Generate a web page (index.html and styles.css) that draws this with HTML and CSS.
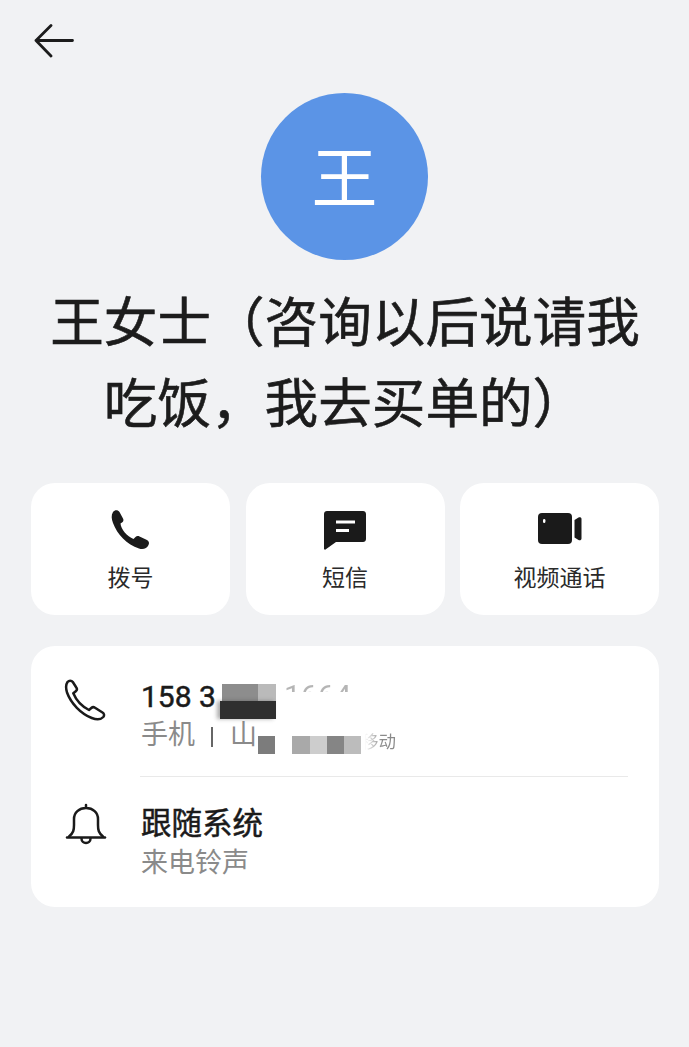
FILE: index.html
```html
<!DOCTYPE html>
<html lang="zh-CN">
<head>
  <meta charset="UTF-8">
  <meta name="viewport" content="width=device-width, initial-scale=1.0">
  <title>王女士</title>
  <link rel="stylesheet" href="styles.css">
</head>
<body>
  <div class="page">
    <header class="topbar">
      <svg class="back" width="42" height="34" viewBox="0 0 42 34" fill="none" stroke="#1c1c1c" stroke-width="2.800" stroke-linecap="round" stroke-linejoin="round">
        <path d="M38.500 16.500H2M17 1.500L2 16.500L17 32"/>
      </svg>
    </header>

    <div class="avatar">王</div>
    <h1 class="name">王女士（咨询以后说请我<br>吃饭，我去买单的）</h1>

    <div class="actions">
      <div class="action">
        <svg width="42" height="42" viewBox="0 0 42 42" fill="#1a1a1a">
          <path d="M3 3C5 .5 8 1 9.500 3L13 9.500C13.800 11 13.500 12.500 12 13.500L10.500 14.500C11 20 17 27.500 23.500 30L25.500 28C26.500 27 28 26.800 29.500 27.500L37 31C39 32 39.500 34 38.500 36C37 39.500 33 41 29 39.500C17 36 7 25 3 14C1.500 10 1 6 3 3Z"/>
        </svg>
        <span>拨号</span>
      </div>
      <div class="action">
        <svg width="42" height="42" viewBox="0 0 42 42">
          <path fill="#1a1a1a" d="M0 5C0 3.300 1.300 2 3 2H39C40.700 2 42 3.300 42 5V30C42 31.700 40.700 33 39 33H12L1.500 40.500C.7 41 0 40.500 0 39.500Z"/>
          <path stroke="#fff" stroke-width="3" d="M12 13H31M12 21.500H25"/>
        </svg>
        <span>短信</span>
      </div>
      <div class="action">
        <svg width="46" height="42" viewBox="0 0 46 42">
          <rect x="1" y="4" width="34" height="31" rx="4" fill="#1a1a1a"/>
          <path fill="#1a1a1a" d="M37.500 11L41.500 8.500C43 7.800 44.500 8.500 44.500 10V29.500C44.500 31 43 31.800 41.500 31L37.500 28.500Z"/>
          <rect x="6" y="10" width="2.400" height="4" rx="1.200" fill="#fff"/>
        </svg>
        <span>视频通话</span>
      </div>
    </div>

    <section class="info">
      <div class="row row-phone">
        <svg class="row-icon" width="44" height="44" viewBox="0 0 44 44" fill="none" stroke="#1a1a1a" stroke-width="2.500" stroke-linejoin="round">
          <path d="M4.500 4C6 2.200 8.500 2.200 9.800 4L13.300 9.500C14.200 10.800 14 12.300 12.800 13.300L10.300 15.300C13.300 22.500 19 28.500 26 32L28.300 30C29.400 29 30.800 28.900 32 29.700L39.500 34.500C41.300 35.700 41.500 37.500 40.300 39C37.500 42 33.500 41.800 28.800 40C18 35.800 8 25.500 4 14.500C2.800 10.500 2.800 6.500 4.500 4Z"/>
        </svg>
        <div class="row-text has-mosaic">
          <div class="row-title">158 3</div>
          <div class="row-sub">手机<i class="sep"></i>山</div>
          <span class="ghost ghost-num">1664</span>
          <span class="ghost ghost-loc">移动</span>
          <span class="mosaic m1"></span><span class="mosaic m2"></span><span class="mosaic m3"></span>
          <span class="mosaic m4"></span><span class="mosaic m5"></span><span class="mosaic m6"></span>
          <span class="mosaic m7"></span><span class="mosaic m8"></span>
        </div>
      </div>
      <div class="divider"></div>
      <div class="row row-ring">
        <svg class="row-icon bell" width="44" height="44" viewBox="0 0 44 44" fill="none" stroke="#1a1a1a" stroke-width="2.500" stroke-linejoin="round" stroke-linecap="round">
          <path d="M3 34.500H41"/>
          <path d="M5 33.500C9.500 30 10 27 10 22V16C10 9.500 15 5 22 5C29 5 34 9.500 34 16V22C34 27 34.500 30 39 33.500M22 2V5M17.500 35.500C17.500 41.500 26.500 41.500 26.500 35.500"/>
        </svg>
        <div class="row-text">
          <div class="row-title ring">跟随系统</div>
          <div class="row-sub ring-sub">来电铃声</div>
        </div>
      </div>
    </section>
  </div>
</body>
</html>
```

FILE: styles.css
```css
* {
  box-sizing: border-box;
}
body {
  margin: 0;
  background-color: #f1f2f4;
  font-family: "Noto Sans CJK SC", "Noto Sans", sans-serif;
  color: #1a1a1a;
}
.page {
  height: 1047px;
  padding: 0 30px 0 31px;
  overflow: hidden;
}
.topbar {
  height: 93px;
  padding: 24px 0 0 3px;
}
.back {
  display: block;
}
.avatar {
  width: 167px;
  height: 167px;
  margin-left: 230px;
  border-radius: 50%;
  background-color: #5b94e6;
  color: #fff;
  font-size: 66px;
  line-height: 161px;
  text-align: center;
}
.name {
  margin: 18px -20px 0;
  font-size: 53.600px;
  font-weight: 400;
  -webkit-text-stroke: 0.6px #1c1c1c;
  line-height: 81px;
  text-align: center;
  white-space: nowrap;
  color: #1c1c1c;
}
.actions {
  display: grid;
  grid-template-columns: repeat(3, 199px);
  justify-content: space-between;
  margin-top: 43px;
}
.action {
  height: 132px;
  padding-top: 26px;
  border-radius: 24px;
  background-color: #fff;
  display: flex;
  flex-direction: column;
  align-items: center;
  font-size: 23px;
  line-height: 32px;
  color: #2a2a2a;
}
.action svg {
  display: block;
  margin-bottom: 9px;
}
.info {
  height: 261px;
  margin-top: 31px;
  border-radius: 24px;
  background-color: #fff;
}
.row {
  display: flex;
  padding-left: 32px;
}
.row-phone {
  height: 130px;
  padding-top: 32px;
}
.row-ring {
  padding-top: 24px;
}
.row-icon {
  flex: none;
}
.bell {
  margin: 2px -1px 0 1px;
}
.row-text {
  margin-left: 34px;
  width: 300px;
}
.has-mosaic {
  position: relative;
}
.row-title {
  font-family: "Roboto", "Noto Sans CJK SC", sans-serif;
  font-size: 30px;
  font-weight: 400;
  -webkit-text-stroke: 0.5px #1a1a1a;
  line-height: 37px;
  white-space: nowrap;
}
.row-title.ring {
  font-family: "Noto Sans CJK SC", sans-serif;
  font-size: 30.500px;
  line-height: 40px;
}
.row-sub {
  font-size: 27px;
  line-height: 36px;
  color: #8a8a8a;
  white-space: nowrap;
}
.ring-sub {
  margin-top: 2px;
}
.sep {
  display: inline-block;
  width: 2px;
  height: 20px;
  margin: 0 17px 0 16px;
  background-color: #666;
  vertical-align: -3px;
}
.divider {
  height: 1px;
  margin: 0 31px 0 109px;
  background-color: #e9e9e9;
}
/* redacted bits of the number and location, positions follow the original blur */
.ghost {
  position: absolute;
  color: transparent;
  white-space: nowrap;
  -webkit-background-clip: text;
  background-clip: text;
}
.ghost-num {
  left: 143px;
  top: 0;
  font-family: "Roboto", sans-serif;
  font-size: 30px;
  line-height: 36px;
  background-image: linear-gradient(#b5b5b5 40%, #fff 40%);
}
.ghost-loc {
  left: 220px;
  top: 52px;
  font-size: 17.500px;
  line-height: 22px;
  background-image: linear-gradient(90deg, #fff 10%, #8a8a8a 60%);
}
.mosaic {
  position: absolute;
}
.m1 { left: 81px; top: 6px; width: 36px; height: 18px; background-color: #8d8d8d; }
.m2 { left: 117px; top: 6px; width: 18px; height: 18px; background-color: #bababa; }
.m3 { left: 79px; top: 23px; width: 56px; height: 18px; background-color: #2f2f2f; box-shadow: -3px 0 4px rgba(47, 47, 47, 0.4); }
.m4 { left: 117px; top: 58px; width: 17px; height: 18px; background-color: #7c7c7c; }
.m5 { left: 151px; top: 58px; width: 18px; height: 18px; background-color: #a9a9a9; }
.m6 { left: 169px; top: 58px; width: 17px; height: 18px; background-color: #cdcdcd; }
.m7 { left: 186px; top: 58px; width: 17px; height: 18px; background-color: #858585; }
.m8 { left: 203px; top: 58px; width: 17px; height: 18px; background-color: #bcbcbc; }
```
